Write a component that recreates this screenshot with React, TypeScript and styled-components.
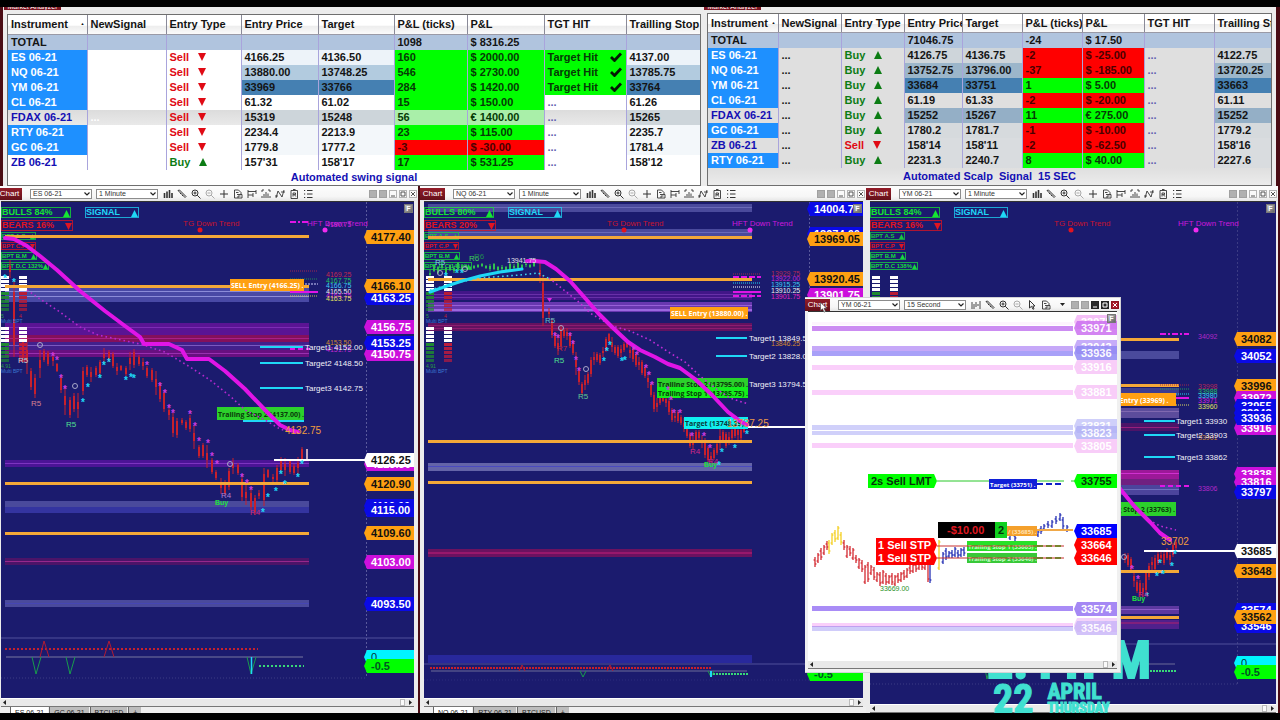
import React from "react";
import styled, { createGlobalStyle } from "styled-components";

/* ---------- theme ---------- */

const SANS = '"Liberation Sans", Arial, sans-serif';
const HUMANIST = '"Open Sans", "Noto Sans", sans-serif';
const NAVY = "#1b1b6e";
const MAROON = "#7c1420";
const FRAME = "#ececec";
const ORANGE = "#ffa012";
const MAGENTA = "#e015e6";
const VIOLET = "#cc10dc";
const BLUE = "#0a0ae6";
const LIME = "#00ff00";
const CYAN = "#1fd8f6";
const RED = "#c8202c";

const GlobalStyle = createGlobalStyle`
  * { box-sizing: border-box; }
  html, body { margin: 0; background: #000; }
  body { font-family: ${SANS}; }
  button, select { font-family: inherit; border-radius: 0; margin: 0; padding: 0; }
`;

const Desktop = styled.main`
  position: relative;
  display: flex;
  flex-direction: column;
  height: 100vh;
  min-height: 480px;
  border: solid #000;
  border-width: 7px 0;
  overflow: hidden;
  background: #000;
`;

/* ---------- analyzer tables ---------- */

const AnalyzerRow = styled.div`
  display: grid;
  grid-template-columns: 704fr 576fr;
  height: 179px;
  flex: none;
`;

const AnalyzerPanel = styled.section<{ $side: "left" | "right" }>`
  display: flex;
  flex-direction: column;
  min-width: 0;
  background: ${FRAME};
  border: solid #4a0c14;
  border-width: ${(p) => (p.$side === "left" ? "0 0 0 3px" : "0 4px 0 0")};
  padding: ${(p) => (p.$side === "left" ? "0 3px 0 4px" : "0 4px 0 3px")};
`;

const TitleStrip = styled.header<{ $height: number }>`
  height: ${(p) => p.$height}px;
  flex: none;
  margin: 0 -3px;
`;

const TitleTab = styled.h2`
  width: 57px;
  height: 3px;
  margin: 0;
  overflow: hidden;
  display: flex;
  align-items: flex-end;
  justify-content: center;
  background: ${MAROON};
  color: #fff;
  font-size: 7px;
  font-weight: 400;
  line-height: 6px;
  white-space: nowrap;
`;

const Sheet = styled.div<{ $bg: string }>`
  flex: 1;
  display: flex;
  flex-direction: column;
  border: 1px solid #6f6f6f;
  background: ${(p) => p.$bg};
  overflow: hidden;
`;

const Grid = styled.table`
  width: 100%;
  table-layout: fixed;
  border-collapse: collapse;
  font-size: 11px;
  font-weight: 700;
  color: #141414;
`;

const HeadCell = styled.th<{ $height: number }>`
  height: ${(p) => p.$height}px;
  padding: 0 0 0 3px;
  text-align: left;
  line-height: 16px;
  white-space: nowrap;
  overflow: hidden;
  background: linear-gradient(#fff 55%, #ececec 56%, #fafafa);
  border-left: 1px solid #8a8a98;
  border-bottom: 1px solid #9a9aa6;
  &:first-child { border-left: 0; }
`;

const SortMark = styled.span`
  float: right;
  margin-right: 2px;
  font-size: 4px;
`;

const Cell = styled.td<{ $bg?: string; $fg?: string }>`
  height: 15px;
  padding: 0 0 0 3px;
  line-height: 15px;
  white-space: nowrap;
  overflow: hidden;
  background: ${(p) => p.$bg ?? "transparent"};
  color: ${(p) => p.$fg ?? "inherit"};
  border-left: 1px solid #a9a4dc;
  &:first-child { border-left: 0; }
`;

const Direction = styled.span`
  display: flex;
  align-items: center;
  gap: 9px;
`;

const HitMark = styled.span`
  display: flex;
  align-items: center;
  justify-content: space-between;
  padding-right: 4px;
`;

const Footnote = styled.p`
  flex: 1;
  margin: 0;
  display: flex;
  align-items: center;
  justify-content: center;
  color: #1410b4;
  font-size: 11px;
  font-weight: 700;
  line-height: 14px;
  white-space: pre;
`;

type Trade = {
  name: string;
  plain?: boolean;
  buy?: boolean;
  entry: string;
  target: string;
  ticks: string;
  pl: string;
  hit?: boolean;
  stop: string;
  shade?: string;
  row?: string;
  win?: string;
};

const HEADINGS = ["Instrument", "NewSignal", "Entry Type", "Entry Price", "Target", "P&L (ticks)", "P&L", "TGT HIT", "Trailling Stop"];

const swingTrades: Trade[] = [
  { name: "ES 06-21", entry: "4166.25", target: "4136.50", ticks: "160", pl: "$ 2000.00", hit: true, stop: "4137.00", shade: "#edf3f9" },
  { name: "NQ 06-21", entry: "13880.00", target: "13748.25", ticks: "546", pl: "$ 2730.00", hit: true, stop: "13785.75", shade: "#b2cbdf" },
  { name: "YM 06-21", entry: "33969", target: "33766", ticks: "284", pl: "$ 1420.00", hit: true, stop: "33764", shade: "#4580b2" },
  { name: "CL 06-21", entry: "61.32", target: "61.02", ticks: "15", pl: "$ 150.00", stop: "61.26" },
  { name: "FDAX 06-21", plain: true, entry: "15319", target: "15248", ticks: "56", pl: "€ 1400.00", stop: "15265", shade: "#cdd5da", row: "linear-gradient(#dcdcdc, #e9e9e9)", win: "#a9efa9" },
  { name: "RTY 06-21", entry: "2234.4", target: "2213.9", ticks: "23", pl: "$ 115.00", stop: "2235.7", shade: "#f3f7fa" },
  { name: "GC 06-21", entry: "1779.8", target: "1777.2", ticks: "-3", pl: "$ -30.00", stop: "1781.4", shade: "#f3f7fa" },
  { name: "ZB 06-21", plain: true, buy: true, entry: "157'31", target: "158'17", ticks: "17", pl: "$ 531.25", stop: "158'12" },
];

const scalpTrades: Trade[] = [
  { name: "ES 06-21", buy: true, entry: "4126.75", target: "4136.75", ticks: "-2", pl: "$ -25.00", stop: "4122.75", shade: "#ced5da" },
  { name: "NQ 06-21", buy: true, entry: "13752.75", target: "13796.00", ticks: "-37", pl: "$ -185.00", stop: "13720.25", shade: "#9cb6ca" },
  { name: "YM 06-21", buy: true, entry: "33684", target: "33751", ticks: "1", pl: "$ 5.00", stop: "33663", shade: "#4580b2" },
  { name: "CL 06-21", buy: true, entry: "61.19", target: "61.33", ticks: "-2", pl: "$ -20.00", stop: "61.11" },
  { name: "FDAX 06-21", plain: true, buy: true, entry: "15252", target: "15267", ticks: "11", pl: "€ 275.00", stop: "15252", shade: "#94afc6" },
  { name: "GC 06-21", buy: true, entry: "1780.2", target: "1781.7", ticks: "-1", pl: "$ -10.00", stop: "1779.2", shade: "#d6dadd" },
  { name: "ZB 06-21", plain: true, entry: "158'14", target: "158'11", ticks: "-2", pl: "$ -62.50", stop: "158'16", shade: "#d9dcdf" },
  { name: "RTY 06-21", buy: true, entry: "2231.3", target: "2240.7", ticks: "8", pl: "$ 40.00", stop: "2227.6", shade: "#d9dcdf" },
];

function Analyzer(props: {
  widths: number[];
  headHeight: number;
  totals: string[];
  trades: Trade[];
  dots: boolean;
}) {
  const { widths, headHeight, totals, trades, dots } = props;
  return (
    <Grid>
      <colgroup>
        {widths.map((w, i) => (
          <col key={i} width={w} />
        ))}
      </colgroup>
      <thead>
        <tr>
          {HEADINGS.map((h, i) => (
            <HeadCell key={h} $height={headHeight} scope="col">
              {h}
              {i === 0 && <SortMark>▲</SortMark>}
            </HeadCell>
          ))}
        </tr>
      </thead>
      <tbody>
        <tr>
          {totals.map((t, i) => (
            <Cell key={i} $bg="#b0c4de">{t}</Cell>
          ))}
        </tr>
        {trades.map((t) => {
          const loss = t.ticks.startsWith("-");
          const score = loss ? "#ff0000" : t.win ?? LIME;
          const ink = loss ? "#4a0000" : "#063a06";
          return (
            <tr key={t.name} style={{ background: t.row }}>
              <Cell $bg={t.plain ? undefined : "#1e90ff"} $fg={t.plain ? "#1410b4" : "#fff"}>{t.name}</Cell>
              <Cell $fg={dots ? undefined : "#fff"}>{dots || t.row ? "..." : ""}</Cell>
              <Cell $fg={t.buy ? "#0c7c14" : "#e00a14"}>
                <Direction>
                  {t.buy ? "Buy" : "Sell"}
                  <svg width="8" height="8" viewBox="0 0 8 8">
                    <path d={t.buy ? "M0 8L4 0L8 8Z" : "M0 0H8L4 8Z"} fill="currentColor" />
                  </svg>
                </Direction>
              </Cell>
              <Cell $bg={t.shade}>{t.entry}</Cell>
              <Cell $bg={t.shade}>{t.target}</Cell>
              <Cell $bg={score} $fg={ink}>{t.ticks}</Cell>
              <Cell $bg={score} $fg={ink}>{t.pl}</Cell>
              <Cell $bg={t.hit ? LIME : undefined} $fg={t.hit ? "#063a06" : "#6060b0"}>
                {t.hit ? (
                  <HitMark>
                    Target Hit
                    <svg width="12" height="10" viewBox="0 0 12 10">
                      <path d="M1 5L4.5 8.5L11 1.5" fill="none" stroke="#041804" strokeWidth="2.8" />
                    </svg>
                  </HitMark>
                ) : (
                  "..."
                )}
              </Cell>
              <Cell $bg={t.shade}>{t.stop}</Cell>
            </tr>
          );
        })}
      </tbody>
    </Grid>
  );
}

/* ---------- chart window chrome ---------- */

const ChartRow = styled.div`
  display: grid;
  grid-template-columns: 420fr 446fr 414fr;
  flex: 1;
  min-height: 0;
`;

const ChartWindow = styled.section<{ $edge?: boolean }>`
  display: flex;
  flex-direction: column;
  min-width: 0;
  min-height: 0;
  background: ${FRAME};
  border-right: ${(p) => (p.$edge ? "2px solid #4a0c14" : "0")};
`;

const Toolbar = styled.div<{ $height: number; $shift?: number }>`
  display: flex;
  align-items: center;
  height: ${(p) => p.$height}px;
  flex: none;
  padding: 0 1px 0 0;
  background: linear-gradient(#fdfdfd, #f6f6f6 70%, #e6e6e6);
  overflow: hidden;
  & > :first-child { margin-left: ${(p) => -(p.$shift ?? 0)}px; }
`;

const ChartTab = styled.button`
  flex: none;
  width: 25px;
  height: 12px;
  margin-right: 8px;
  border: 0;
  background: linear-gradient(#941c28, #64101a);
  color: #fff;
  font-size: 8px;
  line-height: 12px;
`;

const Picker = styled.label`
  position: relative;
  flex: none;
  width: 62px;
  height: 10px;
  margin-right: 4px;
  display: block;
  color: #222;
  & select {
    display: block;
    appearance: none;
    width: 100%;
    height: 10px;
    border: 1px solid #8c8c8c;
    background: #fff;
    color: #333;
    font-size: 7px;
    line-height: 8px;
    padding-left: 2px;
  }
  & svg { position: absolute; right: 2px; top: 3px; pointer-events: none; }
`;

const IconRow = styled.div`
  display: flex;
  flex: none;
  margin-left: -1px;
`;

const IconButton = styled.button`
  width: 14px;
  height: 12px;
  display: grid;
  place-items: center;
  border: 0;
  background: none;
  color: #333;
`;

const WindowButtons = styled.div`
  display: flex;
  flex: none;
  gap: 2px;
  margin-left: auto;
`;

const WindowButton = styled.button<{ $tone: "grey" | "light" | "dark" | "red" }>`
  width: 8px;
  height: 8px;
  display: grid;
  place-items: center;
  border: 1px solid ${(p) => ({ grey: "#a0a0a0", light: "#b4b4b4", dark: "#222", red: "#8c1420" })[p.$tone]};
  background: ${(p) => ({ grey: "#b0b0b0", light: "#fafafa", dark: "#2a2a2a", red: "#a81c2a" })[p.$tone]};
  color: ${(p) => (p.$tone === "light" ? "#555" : "#fff")};
`;

const PlotFrame = styled.div<{ $sides: string; $bg: string }>`
  position: relative;
  flex: 1;
  min-height: 0;
  margin: ${(p) => `0 ${p.$sides}`};
  border-top: 1px solid #333;
  background: ${(p) => p.$bg};
  & > svg { display: block; width: 100%; height: 100%; }
`;

const FixedButton = styled.button`
  position: absolute;
  top: 2px;
  right: 1px;
  width: 9px;
  height: 9px;
  border: 1px solid #777;
  background: linear-gradient(135deg, #bbb, #666);
  color: #fff;
  font-size: 7px;
  font-weight: 700;
  line-height: 7px;
`;

const ScrollTrack = styled.div<{ $sides: string }>`
  flex: none;
  display: flex;
  justify-content: space-between;
  align-items: center;
  height: 9px;
  margin: ${(p) => `0 ${p.$sides}`};
  padding: 0 2px;
  background: #e9e9e9;
  border-top: 1px solid #fff;
  border-bottom: 1px solid #777;
`;

const ScrollEnd = styled.span`
  display: flex;
  gap: 4px;
  align-items: center;
`;

const ScrollThumb = styled.span`
  width: 5px;
  height: 7px;
  background: #fafafa;
  border: 1px solid #bbb;
`;

const TabStrip = styled.div<{ $indent: number }>`
  flex: none;
  display: flex;
  gap: 1px;
  align-items: flex-start;
  height: 6px;
  padding-left: ${(p) => p.$indent}px;
  background: #efefef;
  overflow: hidden;
`;

const SheetTab = styled.button<{ $active?: boolean }>`
  flex: none;
  height: 12px;
  padding: 0 4px;
  border: 0;
  border-left: 1px solid #666;
  background: ${(p) => (p.$active ? "#fff" : "#bdbdbd")};
  color: #222;
  font-size: 7px;
  line-height: 12px;
`;

const icons: Record<string, React.ReactNode> = {
  bars: <path d="M1.5 4V9M4 2.5V9M6.5 1V9M9 4V9" strokeWidth="1.6" />,
  thinBars: <path d="M1 2V9M3 4V9M5 2V7M7 4V6M9 1V9" strokeWidth="0.9" />,
  pencil: <path d="M1 1.5L8 8.5M2.5 1L9 7.5M8 8.5L9 7.5M1 1.5L2.5 1M3 5L4 4M5 7L6 6" />,
  zoomIn: <path d="M6.2 6.2L9.5 9.5M1 4a3 3 0 1 0 6 0a3 3 0 1 0-6 0M4 2.5V5.5M2.5 4H5.5" />,
  zoomOut: <path d="M6.2 6.2L9.5 9.5M1 4a3 3 0 1 0 6 0a3 3 0 1 0-6 0M2.5 4H5.5" stroke="#aaa" />,
  cross: <path d="M5 1V9M1 5H9" />,
  pointer: <path d="M2.5 .5V8L4.5 6.3L6 9.3L7 8.7L5.8 6H8Z" />,
  page: <path d="M1.5 9V1H5.5L8 3.5V5M1.5 9H5M4 5.5H9V9H5V7H7.5M3 3.5H5.5" strokeWidth="0.9" />,
  range: <path d="M1 1V9M9 1V5M1 2.5H9M1 6H6M6 4V8" strokeWidth="0.9" />,
  study: <path d="M1 3V1H3M7 1H9V3M1 7V9M9 7V9M3 9V5M5 9V3M7 9V4.5" strokeWidth="0.9" />,
  zig: <path d="M1 9L3 2L7 8L9 1M0 7H3M6 3H10" strokeWidth="0.9" />,
  script: <path d="M2 1.5H8.5V9.5H2ZM4 0.5H6.5M4 7.5V4H6.5V5.7H4M5.5 5.7L6.8 7.5" strokeWidth="0.9" />,
  list: <path d="M1 1.5H2.2M1 5H2.2M1 8.5H2.2M4 1.5H9.5M4 5H9.5M4 8.5H9.5" />,
};

const FULL_TOOLS = ["bars", "pencil", "zoomIn", "zoomOut", "cross", "page", "range", "study", "zig", "script", "list"];
const SHORT_TOOLS = ["thinBars", "pencil", "zoomIn", "zoomOut", "pointer", "page"];

function Chevron() {
  return (
    <svg width="6" height="4" viewBox="0 0 6 4">
      <path d="M.5 .5L3 3L5.5 .5" fill="none" stroke="#222" strokeWidth="1.2" />
    </svg>
  );
}

function ChartToolbar(props: { symbol: string; period: string; height: number; shift?: number; focused?: boolean }) {
  const { symbol, period, height, shift, focused } = props;
  const tones = focused ? (["grey", "grey", "dark", "dark", "red"] as const) : (["grey", "grey", "light", "light", "light"] as const);
  const marks = ["", "", "M1 5H5", "M1 1H5V5H1Z", "M1 1L5 5M5 1L1 5"];
  const names = ["Link instrument", "Link interval", "Minimize", "Maximize", "Close"];
  return (
    <Toolbar $height={height} $shift={shift}>
      <ChartTab>Chart</ChartTab>
      <Picker>
        <select aria-label="Instrument" defaultValue={symbol}>
          <option>{symbol}</option>
        </select>
        <Chevron />
      </Picker>
      <Picker>
        <select aria-label="Interval" defaultValue={period}>
          <option>{period}</option>
        </select>
        <Chevron />
      </Picker>
      <IconRow>
        {(focused ? SHORT_TOOLS : FULL_TOOLS).map((t) => (
          <IconButton key={t} aria-label={t}>
            <svg width="10" height="10" viewBox="0 0 10 10" fill="none" stroke="currentColor" strokeWidth="1">
              {icons[t]}
            </svg>
          </IconButton>
        ))}
      </IconRow>
      <WindowButtons>
        {focused && (
          <IconButton aria-label="More tools">
            <svg width="5" height="3" viewBox="0 0 5 3">
              <path d="M0 0H5L2.5 3Z" fill="#222" />
            </svg>
          </IconButton>
        )}
        {tones.map((tone, i) => (
          <WindowButton key={names[i]} $tone={tone} aria-label={names[i]} style={{ alignSelf: "center" }}>
            <svg width="6" height="6" viewBox="0 0 6 6" fill="none" stroke="currentColor">
              <path d={marks[i]} />
            </svg>
          </WindowButton>
        ))}
      </WindowButtons>
    </Toolbar>
  );
}

function Scrollbar({ sides }: { sides: string }) {
  return (
    <ScrollTrack $sides={sides}>
      <svg width="3" height="5" viewBox="0 0 3 5"><path d="M3 0V5L0 2.5Z" fill="#222" /></svg>
      <ScrollEnd>
        <ScrollThumb />
        <svg width="3" height="5" viewBox="0 0 3 5"><path d="M0 0V5L3 2.5Z" fill="#222" /></svg>
      </ScrollEnd>
    </ScrollTrack>
  );
}

function Sheets({ indent, names }: { indent: number; names: string[] }) {
  return (
    <TabStrip $indent={indent}>
      {names.map((n, i) => (
        <SheetTab key={n} $active={i === 0}>{n}</SheetTab>
      ))}
    </TabStrip>
  );
}

/* ---------- drawing primitives ---------- */

const Txt = styled.text<{ $size: number; $bold?: boolean; $face?: string }>`
  font-family: ${(p) => p.$face ?? SANS};
  font-size: ${(p) => p.$size}px;
  font-weight: ${(p) => (p.$bold ? 700 : 400)};
  white-space: pre;
`;

type Band = [y: number, h: number, color: string, opacity?: number];

function Bands({ x1, x2, items }: { x1: number; x2: number; items: Band[] }) {
  return (
    <g>
      {items.map(([y, h, c, o], i) => (
        <rect key={i} x={x1} y={y} width={x2 - x1} height={h} fill={c} opacity={o ?? 1} />
      ))}
    </g>
  );
}

type Tag = [label: string, y: number, fill: string, ink?: string, opacity?: number];

function PriceTags({ x, right, items }: { x: number; right: number; items: Tag[] }) {
  return (
    <g>
      {items.map(([label, y, fill, ink, op], i) => (
        <g key={i} opacity={op ?? 1}>
          <path d={`M${x} ${y}L${x + 3} ${y - 7}H${right}V${y + 7}H${x + 3}Z`} fill={fill} />
          <Txt $size={11} $bold={label !== "0"} x={x + 7} y={y + 4} fill={ink ?? "#fff"}>{label}</Txt>
        </g>
      ))}
    </g>
  );
}

function Candles({ bars, color }: { bars: number[][]; color: string }) {
  return (
    <g stroke={color}>
      {bars.map(([x, top, bottom], i) => {
        const pad = Math.round((bottom - top) * (i % 3 === 0 ? 0.35 : 0.15));
        return (
          <g key={i}>
            <path d={`M${x} ${top}V${bottom}`} strokeWidth="1" />
            <path d={`M${x} ${top + pad}V${bottom - pad}`} strokeWidth="2" />
          </g>
        );
      })}
    </g>
  );
}

function Ohlc({ bars, color }: { bars: number[][]; color: string }) {
  const d = bars.map(([x, t, b], i) => `M${x} ${t}V${b}M${x - 1.5} ${i % 2 ? b - 2 : t + 3}H${x}M${x} ${i % 2 ? t + 2 : b - 3}H${x + 1.5}`).join("");
  return <path d={d} stroke={color} strokeWidth="1.2" fill="none" />;
}

const spread = (x0: number, step: number, ranges: number[][]) => ranges.map(([t, b], i) => [x0 + i * step, t, b]);

function Line({ points, color, width = 4, dotted }: { points: string; color: string; width?: number; dotted?: boolean }) {
  return (
    <polyline
      points={points}
      fill="none"
      stroke={color}
      strokeWidth={dotted ? 1.6 : width}
      strokeDasharray={dotted ? "1.6 3" : undefined}
      strokeLinejoin="round"
      strokeLinecap={dotted ? "butt" : "round"}
    />
  );
}

function Stars({ at, color }: { at: number[][]; color: string }) {
  return (
    <g fill={color}>
      {at.map(([x, y], i) => (
        <Txt key={i} $size={10} $bold x={x} y={y + 6} textAnchor="middle">*</Txt>
      ))}
    </g>
  );
}

function Box(props: { x: number; y: number; w: number; h: number; fill: string; ink: string; label: string; opacity?: number; size?: number }) {
  const { x, y, w, h, fill, ink, label, opacity, size } = props;
  return (
    <g>
      <rect x={x} y={y} width={w} height={h} fill={fill} opacity={opacity ?? 1} />
      <Txt $size={size ?? 7} $bold $face={HUMANIST} x={x + 1} y={y + h / 2 + 3} fill={ink}>{label}</Txt>
    </g>
  );
}

function Meter({ x, y, color }: { x: number; y: number; color: string }) {
  const cells = Array.from({ length: 9 }, (_, i) => i);
  return (
    <g>
      {cells.map((i) => (
        <rect key={i} x={x} y={y + i * 4} width="8" height="3" fill={i < 4 ? "#fff" : color} opacity={i < 4 ? 1 : 1 - (i - 4) * 0.08} />
      ))}
    </g>
  );
}

function Badge(props: { x: number; y: number; w: number; label: string; color: string; down?: boolean; small?: boolean }) {
  const { x, y, w, label, color, down, small } = props;
  const h = small ? 8 : 11;
  const t = small ? 5 : 7;
  const r = x + w - 1;
  const b = y + h - 1;
  return (
    <g>
      <rect x={x + 0.5} y={y + 0.5} width={w - 1} height={h - 1} fill="none" stroke={color} opacity="0.75" />
      <Txt $size={small ? 6 : 9} $bold x={x + 1} y={b - (small ? 1 : 2)} fill={color}>{label}</Txt>
      <path d={down ? `M${r - t} ${b - t}H${r}L${r - t / 2} ${b}Z` : `M${r - t} ${b}L${r - t / 2} ${b - t}L${r} ${b}Z`} fill={color} />
    </g>
  );
}

function Header(props: { x: number; bulls: string; bears: string; dc: string; tg: number; hft: number }) {
  const { x, bulls, bears, dc, tg, hft } = props;
  return (
    <g>
      <Badge x={x} y={207} w={70} label={`BULLS ${bulls}%`} color="#14e632" />
      <Badge x={x} y={220} w={72} label={`BEARS ${bears}%`} color="#e01420" down />
      <Badge x={x + 84} y={207} w={54} label="SIGNAL" color={CYAN} />
      <Badge x={x} y={232} w={35} label="BPT A.S" color="#18c840" small />
      <Badge x={x} y={242} w={35} label="BPT C.P" color="#dc1424" down small />
      <Badge x={x} y={252} w={36} label="BPT B.M" color="#18d840" small />
      <Badge x={x} y={262} w={48} label={`BPT D.C ${dc}%`} color="#18d840" small />
      <Txt $size={8} x={tg - 17} y={226} fill="#c8142c">TG Down Trend</Txt>
      <circle cx={tg} cy={230} r="2.5" fill="#e01420" />
      <Txt $size={8} x={hft - 18} y={226} fill="#cc18dc">HFT Down Trend</Txt>
      <circle cx={hft} cy={230} r="2.5" fill="#f02cf0" />
    </g>
  );
}

function Meters({ x }: { x: number }) {
  return (
    <g>
      <Meter x={x} y={276} color="#1f8a30" />
      <Meter x={x + 18} y={276} color="#b81c34" />
      <Meter x={x} y={327} color="#1f8a30" />
      <Meter x={x + 18} y={327} color="#c01c3c" />
      <Txt $size={5} x={x} y={318} fill="#28a040">5</Txt>
      <Txt $size={5} x={x + 18} y={318} fill="#c02030">4</Txt>
      <Txt $size={5} x={x} y={323} fill="#3c78d0">Multi BPT</Txt>
      <Txt $size={5} x={x} y={368} fill="#28a040">4.91</Txt>
      <Txt $size={5} x={x} y={373} fill="#3c78d0">Multi BPT</Txt>
    </g>
  );
}

function Labels({ x, size, items }: { x: number; size: number; items: [string, number, string][] }) {
  return (
    <g>
      {items.map(([t, y, c]) => (
        <Txt key={t + y} $size={size} x={x} y={y} fill={c}>{t}</Txt>
      ))}
    </g>
  );
}

function Rules({ items }: { items: [x1: number, x2: number, y: number, color: string, width: number, dash?: string][] }) {
  return (
    <g>
      {items.map(([x1, x2, y, c, w, dash], i) => (
        <path key={i} d={`M${x1} ${y}H${x2}`} stroke={c} strokeWidth={w} strokeDasharray={dash} />
      ))}
    </g>
  );
}

/* ---------- ES one-minute ---------- */

const esBars = [
  [10, 260, 278], [14, 280, 357], [23, 338, 362], [27, 337, 374], [31, 368, 390], [35, 374, 398], [40, 350, 378], [44, 349, 362],
  [48, 351, 366], [53, 352, 366], [57, 363, 372], [61, 375, 393], [65, 386, 415], [70, 397, 418], [74, 393, 412], [78, 393, 418],
  [83, 367, 395], [87, 365, 377], [91, 367, 382], [96, 366, 377], [100, 360, 375], [104, 348, 364], [109, 350, 362], [113, 352, 368],
  [117, 363, 375], [121, 365, 371], [126, 366, 376], [130, 352, 370], [134, 349, 368], [139, 355, 366], [143, 358, 370],
  [147, 366, 378], [152, 368, 382], [156, 371, 395], [160, 382, 402], [164, 390, 412], [169, 405, 420], [173, 413, 437],
  [177, 418, 438], [182, 418, 425], [186, 420, 430], [190, 415, 432], [194, 425, 449], [199, 445, 458], [203, 443, 458],
  [207, 445, 468], [212, 458, 474], [216, 470, 480], [221, 478, 494], [225, 480, 495], [229, 468, 490], [233, 458, 474],
  [238, 463, 475], [242, 475, 501], [246, 485, 505], [251, 490, 510], [255, 495, 515], [259, 490, 499], [264, 468, 506],
  [268, 469, 478], [273, 474, 482], [277, 465, 483], [281, 457, 472], [285, 458, 476], [290, 459, 474], [294, 464, 475],
  [298, 457, 474], [302, 447, 462],
];

function EsPlot() {
  return (
    <svg viewBox="1 202 413 496" preserveAspectRatio="xMaxYMin meet" role="img" aria-label="ES 06-21 one minute chart">
      <path d="M366.5 202V678" stroke="#5a5a9c" strokeDasharray="2 2" />
      <Header x={1} bulls="84" bears="16" dc="132" tg={200} hft={325} />
      <Bands
        x1={5}
        x2={309}
        items={[
          [288, 14, "#5a5ab8", 0.75], [291, 1, "#8c8cd8"], [296, 1, "#8c8cd8"],
          [323, 12, "#5a1494"], [327, 1, "#7c2cb4"], [335, 7, "#84105c"], [338, 1, "#a82088"], [342, 8, "#42208c"],
          [345, 1, "#7a58c0"], [350, 7, "#681080"], [353, 1, "#9830b0"],
          [460, 7, "#4c1496"], [463, 1, "#7c34c0"],
          [501, 6, "#4a4a9c"], [507, 6, "#3434a0"],
          [558, 7, "#4c1468"], [561, 1, "#96288c"],
          [600, 7, "#4a4a9c"], [603, 1, "#4646b4"],
        ]}
      />
      <Candles bars={esBars} color={RED} />
      <path d="M307 449V460" stroke="#ffd8d8" strokeWidth="1.5" />
      <Meters x={1} />
      <Bands x1={5} x2={309} items={[[235, 3, "#f4a838"], [285, 3, "#f4a838"], [482, 3, "#f4a838"], [532, 3, "#f4a838"]]} />
      <Rules
        items={[
          [290, 310, 222, MAGENTA, 2, "6 2 2 2"],
          [290, 318, 271, "#a02850", 1, "1 1"], [290, 318, 279, "#209050", 1, "1 1"], [290, 318, 284, "#d0d0ff", 1, "2 1"],
          [290, 318, 292, MAGENTA, 2], [290, 318, 296, "#c8c850", 1, "1 1"],
          [260, 303, 347, CYAN, 2], [260, 303, 363, CYAN, 2], [260, 303, 388, CYAN, 2], [290, 310, 349, MAGENTA, 2, "5 3"],
          [243, 304, 421, CYAN, 2],
          [274, 366, 460, "#fff", 2],
        ]}
      />
      <Box x={230} y={279} w={74} h={12} fill={ORANGE} ink="#fff" label="SELL Entry (4166.25) ." />
      <Box x={217} y={407} w={87} h={13} fill="#2cd02c" ink="#0a3a0a" label="Trailing Stop 2 (4137.00) ." />
      <Line points="27,290 40,299 60,312 80,327 98,335 140,344 165,352 190,367 210,380 230,396 245,410 265,420 280,429 290,432" color="#b428d0" dotted />
      <Line points="5,238 14,239 27,246 40,256 57,270 80,291 105,311 125,326 140,337 144,344 169,344 182,350 187,359 209,359 225,371 245,389 265,410 280,425 290,430 298,432" color={MAGENTA} />
      <Stars at={[[53, 354], [57, 358], [61, 376], [65, 387], [147, 363], [160, 384], [165, 391], [169, 406], [173, 411], [190, 412], [195, 424], [199, 439], [208, 441], [212, 454], [217, 462], [242, 475], [247, 481], [251, 488]]} color="#c83ce0" />
      <Stars at={[[83, 400], [88, 385], [100, 376], [104, 363], [109, 360], [126, 378], [131, 375], [134, 376], [263, 510], [268, 495], [276, 489], [281, 472], [285, 482], [298, 475], [302, 462], [5, 276], [14, 280]]} color={CYAN} />
      <g fill="none" stroke="#a8a8c8">
        <circle cx="40" cy="345" r="2.5" />
        <circle cx="75" cy="386" r="2.5" />
        <circle cx="230" cy="464" r="2.5" />
      </g>
      <Labels x={18} size={8} items={[["R5", 363, "#d0d0d8"]]} />
      <Labels x={31} size={8} items={[["R5", 406, "#d88090"]]} />
      <Labels x={66} size={8} items={[["R5", 427, "#50e090"]]} />
      <Labels x={221} size={8} items={[["R4", 498, "#b080d0"]]} />
      <Labels x={250} size={8} items={[["R4", 515, "#c82878"]]} />
      <Txt $size={7} $bold x={215} y={505} fill="#20e040">Buy</Txt>
      <Labels
        x={326}
        size={7}
        items={[
          ["4180.75", 227, "#d028dc"], ["4169.25", 277, "#c02850"], ["4167.75", 283, "#20c060"], ["4166.75", 288, "#40c8f0"],
          ["4165.50", 294, "#f0f0f0"], ["4164.75", 298, "#d028dc"], ["4163.75", 301, "#e0e060"], ["4153.50", 345, "#d08830"], ["4151.75", 352, "#c028d0"],
        ]}
      />
      <Labels x={305} size={8} items={[["Target1 4152.00", 350, "#f0f0f8"], ["Target2 4148.50", 366, "#f0f0f8"], ["Target3 4142.75", 391, "#f0f0f8"]]} />
      <Labels x={285} size={10} items={[["4132.75", 434, "#f09c40"]]} />
      <PriceTags
        x={364}
        right={414}
        items={[
          ["4177.40", 237, ORANGE, "#111"], ["4163.25", 298, BLUE], ["4166.10", 286, ORANGE, "#111"], ["4156.75", 327, VIOLET],
          ["4150.75", 354, VIOLET], ["4153.25", 343, BLUE], ["4125.50", 464, VIOLET], ["4126.25", 460, "#fff", "#111"],
          ["4120.90", 484, ORANGE, "#111"], ["4116.00", 506, BLUE], ["4115.00", 510, BLUE], ["4109.60", 533, ORANGE, "#111"],
          ["4103.00", 562, VIOLET], ["4093.50", 604, BLUE], ["0", 657, "#00f4ff", "#033"], ["-0.5", 666, LIME, "#052"],
        ]}
      />
      <Rules items={[[1, 414, 638, "#50509a", 1], [6, 303, 657, "#7878a0", 1], [5, 258, 649, RED, 2, "2 2"], [259, 304, 666, "#38d878", 2, "2 2"], [1, 366, 678, "#3c3c84", 1, "1 2"]]} />
      <path d="M40 657L44 641L49 657M104 657L109 641L114 657" fill="none" stroke="#b01c34" />
      <path d="M32 657L36 674L41 657M66 657L70 674L75 657M247 657L251 674L256 657" fill="none" stroke="#189c4c" />
      <path d="M251.500 657V674" stroke={CYAN} strokeWidth="1.5" />
    </svg>
  );
}

/* ---------- NQ one-minute ---------- */

const nqBars = spread(549, 3, [
  [308, 318], [318, 338], [332, 348], [337, 355], [325, 350], [328, 338], [328, 340], [333, 348], [340, 355], [352, 375], [368, 385],
  [382, 395], [375, 390], [372, 385], [357, 377], [352, 365], [352, 362], [353, 365], [347, 357], [337, 352], [333, 342], [337, 352],
  [345, 355], [345, 358], [345, 357], [342, 352], [342, 348], [345, 358], [345, 362], [352, 367], [357, 370], [360, 375], [365, 378],
  [372, 388], [382, 397], [392, 412], [398, 412], [395, 405], [395, 402], [395, 407], [398, 415], [408, 422], [412, 422], [410, 423],
  [415, 425], [418, 432], [423, 438], [432, 448], [435, 450], [430, 442], [430, 440], [435, 448], [438, 458], [446, 462], [452, 463],
  [448, 460], [442, 455], [428, 450], [430, 442], [432, 448], [432, 445], [428, 440], [427, 438], [425, 440], [428, 440], [425, 433],
]);

const nqOpening = spread(430, 4, [
  [270, 278], [264, 272], [266, 274], [263, 270], [267, 274], [264, 271], [266, 273], [262, 270], [265, 271], [264, 268], [266, 270],
  [265, 269], [264, 268], [263, 267], [265, 269], [264, 271], [263, 270], [266, 271], [265, 271], [266, 272], [263, 272], [264, 270],
  [262, 269], [264, 270], [262, 267], [264, 268], [261, 267],
]);

function NqPlot() {
  return (
    <svg viewBox="424 202 439 496" preserveAspectRatio="xMaxYMin meet" role="img" aria-label="NQ 06-21 one minute chart">
      <path d="M809.500 202V678" stroke="#5a5a9c" strokeDasharray="2 2" />
      <Bands
        x1={428}
        x2={752}
        items={[
          [204, 8, "#4a4a9c"], [207, 1, "#6a6ab8"], [229, 7, "#4a4a9c"], [232, 1, "#6a6ab8"],
          [291, 9, "#421688"], [294, 1, "#6830a8"], [297, 1, "#6830a8"], [302, 10, "#6838b0"], [305, 1, "#9860d8"], [309, 2, "#9c68e0"],
          [323, 8, "#641260"], [325, 1, "#8c1c70"], [328, 1, "#8c1c70"],
          [463, 8, "#6464a8"], [466, 1, "#4a4ac0"], [549, 8, "#6c1260"], [552, 2, "#98186c"], [655, 8, "#28289c"],
        ]}
      />
      <Header x={424} bulls="80" bears="20" dc="141" tg={624} hft={750} />
      <Candles bars={nqOpening} color="#30c050" />
      <Candles bars={[[540, 263, 283], [543, 275, 326]]} color={RED} />
      <Candles bars={nqBars} color={RED} />
      <Meters x={426} />
      <Bands x1={428} x2={752} items={[[236, 3, "#f4a838"], [278, 3, "#f4a838"], [440, 3, "#f4a838"], [481, 3, "#f4a838"]]} />
      <Rules
        items={[
          [733, 761, 274, "#a02850", 1, "1 1"], [733, 761, 277, MAGENTA, 2, "6 2"], [733, 761, 283, CYAN, 1, "1 1"], [733, 761, 287, "#fff", 1, "1 1"],
          [733, 761, 292, MAGENTA, 2], [733, 761, 296, MAGENTA, 2, "6 2"],
          [716, 747, 338, CYAN, 2], [716, 747, 356, CYAN, 2], [716, 747, 384, CYAN, 2],
          [737, 863, 427, "#fff", 2],
        ]}
      />
      <Box x={670} y={307} w={78} h={12} fill={ORANGE} ink="#fff" label="SELL Entry (13880.00) ." />
      <Box x={657} y={378} w={91} h={12} fill="#2cd02c" ink="#0a3a0a" label="Trailing Stop 2 (13795.00) ." />
      <Box x={657} y={387} w={91} h={11} fill="#14ee1c" ink="#0a3a0a" label="Trailing Stop 1 (13785.75) ." />
      <Box x={684} y={417} w={64} h={12} fill="#10f0f0" ink="#0a3a3a" label="Target (13748.25) ." />
      <Line points="430,290 455,283 480,278 520,275 538,273 550,279" color="#40d8f0" dotted />
      <Line points="430,292 447,286 462,281 480,276 500,272 522,269" color={CYAN} width={3} />
      <Line points="549,278 565,291 580,303 590,313 612,326 630,331 650,340 670,353 685,362 700,376 715,388 730,398 748,404" color="#c02cd8" dotted />
      <Line points="527,261 535,261 545,262 556,269 570,281 585,298 598,313 612,327 628,342 640,350 655,357 668,364 680,368 695,379 712,395 728,412 740,421 747,425" color={MAGENTA} />
      <Stars at={[[555, 334], [558, 336], [570, 334], [573, 342], [576, 358], [579, 369], [634, 348], [637, 353], [646, 366], [649, 373], [652, 383], [668, 388], [671, 398], [674, 411], [680, 411], [692, 434], [704, 434], [710, 446]]} color="#c83ce0" />
      <Stars at={[[604, 359], [607, 349], [610, 343], [622, 359], [625, 358], [446, 274], [457, 271], [462, 271], [722, 450], [735, 446], [747, 432], [719, 463]]} color={CYAN} />
      <path d="M547 298H552L549.500 302Z" fill="#e028e0" />
      <g fill="none" stroke="#a8a8c8">
        <circle cx="440" cy="273" r="2.5" />
        <circle cx="465" cy="269" r="2.5" />
        <circle cx="561" cy="328" r="2.500" />
        <circle cx="586" cy="369" r="2.500" />
      </g>
      <Labels x={469} size={8} items={[["R6", 261, "#40d060"]]} />
      <Labels x={474} size={8} items={[["R6", 259, "#208850"]]} />
      <Labels x={435} size={8} items={[["R5", 265, "#80c8e0"]]} />
      <Labels x={545} size={8} items={[["R5", 323, "#60c0c8"]]} />
      <Labels x={554} size={8} items={[["R5", 363, "#50e090"]]} />
      <Labels x={557} size={8} items={[["R7", 351, "#c02848"]]} />
      <Labels x={578} size={8} items={[["R5", 399, "#60c890"]]} />
      <Labels x={690} size={8} items={[["R4", 454, "#d02888"]]} />
      <Labels x={708} size={8} items={[["R4", 464, "#d02888"]]} />
      <Txt $size={7} $bold x={704} y={467} fill="#20e040">Buy</Txt>
      <Labels x={507} size={7} items={[["13941.75", 263, "#e0e0e8"]]} />
      <Labels
        x={771}
        size={7}
        items={[
          ["13929.75", 276, "#b02858"], ["13922.00", 281, "#c028d0"], ["13915.25", 287, "#40c8f0"], ["13910.25", 293, "#f0f0f0"],
          ["13901.75", 299, "#e028c0"], ["13846.25", 346, "#d08830"],
        ]}
      />
      <Labels x={749} size={8} items={[["Target1 13849.50", 341, "#f0f0f8"], ["Target2 13828.00", 359, "#f0f0f8"], ["Target3 13794.50", 387, "#f0f0f8"]]} />
      <Labels x={727} size={10} items={[["13737.25", 427, "#e8984a"]]} />
      <PriceTags
        x={807}
        right={863}
        items={[
          ["14004.75", 209, BLUE], ["13974.00", 234, BLUE], ["13969.05", 239, ORANGE, "#111"], ["13920.45", 279, ORANGE, "#111"],
          ["13901.75", 295, VIOLET], ["-0.5", 674, LIME, "#052"],
        ]}
      />
      <Rules items={[[424, 863, 664, "#50509a", 1], [431, 747, 671, "#6c6c98", 1], [430, 712, 668, RED, 2, "2 1"], [713, 748, 674, "#38d878", 2, "2 1"], [424, 809, 680, "#2c2c7c", 1, "1 2"]]} />
      <path d="M519 671L522 665L525 671M607 671L610 665L613 671" fill="none" stroke="#b01c34" />
      <path d="M580 671L583 677L586 671M708 671L711 677L714 671" fill="none" stroke="#189c4c" />
      <path d="M711 671V677" stroke={CYAN} strokeWidth="2" />
    </svg>
  );
}

/* ---------- YM one-minute ---------- */

const ymBars = spread(1125, 3, [
  [553, 563], [553, 567], [557, 573], [570, 587], [580, 593], [580, 597], [583, 597], [570, 593], [563, 580], [557, 570],
  [555, 572], [552, 565], [550, 563], [552, 565], [548, 560], [550, 565], [543, 557], [540, 550],
]);

function YmPlot() {
  return (
    <svg viewBox="870 202 406 502" preserveAspectRatio="xMaxYMin meet" role="img" aria-label="YM 06-21 one minute chart">
      <path d="M1237.500 202V684" stroke="#3c3c84" strokeDasharray="2 2" />
      <Header x={870} bulls="84" bears="16" dc="138" tg={1071} hft={1196} />
      <Meters x={872} />
      <Bands
        x1={874}
        x2={1179}
        items={[
          [338, 3, "#f4a838"], [351, 8, "#4a4a9c"], [384, 3, "#f4a838"], [388, 8, "#3c3c90"], [408, 10, "#5c4c9c"], [411, 1, "#8068b0"],
          [423, 8, "#4c1468"], [427, 1, "#98207c"],
          [470, 9, "#9c1898"], [473, 1, "#d030d0"], [479, 6, "#702080"], [485, 10, "#4c449c"], [489, 1, "#7070c0"],
          [606, 8, "#5c38a0"], [609, 1, "#8c5cc8"], [616, 3, "#f4a838"], [620, 9, "#50208c"], [622, 2, "#80207c"],
        ]}
      />
      <Candles bars={ymBars} color={RED} />
      <Bands x1={874} x2={1179} items={[[570, 3, "#f4a838"]]} />
      <Rules
        items={[
          [1160, 1189, 334, MAGENTA, 2, "6 2 2 2"], [1160, 1189, 385, "#a02850", 1, "1 1"], [1160, 1189, 389, "#20a050", 1, "1 1"],
          [1160, 1189, 394, CYAN, 1, "1 1"], [1160, 1189, 398, MAGENTA, 2], [1160, 1189, 405, "#e0e060", 1, "1 1"],
          [1144, 1175, 421, CYAN, 2], [1144, 1175, 435, CYAN, 2], [1144, 1175, 457, CYAN, 2], [1160, 1189, 486, MAGENTA, 2, "5 3"],
          [1144, 1235, 551, "#fff", 2],
        ]}
      />
      <Box x={1101} y={393} w={75} h={13} fill={ORANGE} ink="#fff" label="SELL Entry (33969) ." />
      <Box x={1094} y={502} w={82} h={14} fill="#2cd02c" ink="#0a3a0a" label="Trailing Stop 2 (33763) ." />
      <Line points="1145,518 1160,526 1176,530" color="#c02cd8" dotted />
      <Line points="1112,478 1121,490 1135,507 1150,522 1160,533 1170,540" color={MAGENTA} />
      <Stars at={[[1132, 567], [1138, 577]]} color="#c83ce0" />
      <Stars at={[[1147, 594], [1157, 574], [1160, 561], [1163, 572], [1172, 564], [1175, 552]]} color={CYAN} />
      <circle cx="1124" cy="557" r="2.500" fill="none" stroke="#a8a8c8" />
      <Labels x={1138} size={8} items={[["R4", 597, "#d02888"]]} />
      <Txt $size={7} $bold x={1132} y={601} fill="#20e040">Buy</Txt>
      <Labels
        x={1198}
        size={7}
        items={[
          ["34092", 339, "#b028c8"], ["33998", 389, "#b02858"], ["33988", 394, "#20c060"], ["33980", 398, "#40c8f0"],
          ["33971", 403, "#d028dc"], ["33960", 409, "#e0e060"], ["33901", 440, "#d08830"], ["33806", 491, "#b028c8"],
        ]}
      />
      <Labels x={1176} size={8} items={[["Target1 33930", 424, "#f0f0f8"], ["Target2 33903", 438, "#f0f0f8"], ["Target3 33862", 460, "#f0f0f8"]]} />
      <Labels x={1161} size={10} items={[["33702", 545, "#f09c40"]]} />
      <PriceTags
        x={1234}
        right={1276}
        items={[
          ["34082", 339, ORANGE, "#111"], ["34052", 356, BLUE], ["33996", 386, ORANGE, "#111"], ["33972", 398, VIOLET], ["33955", 406, BLUE],
          ["33916", 428, VIOLET], ["33943", 413, BLUE], ["33936", 418, BLUE], ["33838", 474, VIOLET], ["33816", 482, VIOLET], ["33797", 492, BLUE],
          ["33685", 551, "#fff", "#111"], ["33648", 571, ORANGE, "#111"], ["33574", 610, BLUE], ["33546", 626, BLUE],
          ["33562", 617, ORANGE, "#111"], ["0", 663, "#00f4ff", "#033"], ["-0.5", 672, LIME, "#052"],
        ]}
      />
      <Rules items={[[870, 1276, 644, "#50509a", 1], [876, 1175, 664, "#6c6c98", 1], [1150, 1176, 671, "#38d878", 2, "2 1"], [870, 1237, 684, "#3c3c84", 1, "1 2"]]} />
      <path d="M984 664L987 679L991 664" fill="none" stroke="#189c4c" />
    </svg>
  );
}

/* ---------- YM fifteen-second ---------- */

const scalpFall = spread(844, 3, [
  [540, 550], [545, 558], [546, 556], [548, 560], [555, 563], [558, 569], [560, 572], [565, 584], [562, 582], [565, 575], [567, 580],
  [572, 582], [572, 586], [570, 584], [573, 585], [575, 584], [573, 585], [575, 586], [573, 583], [572, 582], [570, 580], [568, 578],
  [565, 574], [563, 573], [562, 572], [560, 570], [558, 570], [556, 570], [555, 582],
]);
const scalpRise = spread(943, 3, [[552, 564], [548, 560], [551, 558], [550, 558], [547, 557], [550, 558], [548, 557], [547, 556]]);
const scalpTop = [[1010, 530, 540], [1015, 533, 541], [1038, 530, 537], [1041, 526, 534], [1044, 524, 531], [1048, 521, 528], [1052, 520, 528], [1056, 516, 524], [1060, 513, 521], [1063, 517, 529], [1067, 525, 532]];

function ScalpPlot() {
  return (
    <svg viewBox="808 312 309 348" preserveAspectRatio="xMaxYMin meet" role="img" aria-label="YM 06-21 fifteen second chart">
      <Bands
        x1={812}
        x2={1073}
        items={[
          [322, 3, "#fdf4fd"], [326, 5, "#cc8cf2"], [346, 5, "#c6a8f8"], [351, 5, "#a8a0f8"], [365, 5, "#facffa"], [390, 5, "#facffa"],
          [425, 5, "#d0d0fa"], [431, 4, "#d0d0fa"], [443, 5, "#facffa"], [606, 5, "#a98cf6"], [623, 4, "#facffa"], [627, 4, "#d0ccfa"], [626, 1, "#c0a0f0"],
        ]}
      />
      <Ohlc bars={[[815, 557, 567], [818, 553, 563], [821, 548, 560], [824, 545, 555], [827, 541, 550]]} color="#d01820" />
      <Ohlc bars={[[829, 540, 554], [832, 533, 545], [835, 530, 542], [838, 526, 540], [841, 532, 545], [939, 540, 570]]} color="#f4cc10" />
      <Ohlc bars={scalpFall} color="#d01820" />
      <Ohlc bars={[[930, 552, 583], ...scalpRise, ...scalpTop]} color="#1420b0" />
      <Rules
        items={[
          [937, 1064, 481, "#28c828", 1], [1037, 1063, 484, "#1020c8", 2, "6 3"], [1037, 1073, 530, "#f0a848", 2],
          [1037, 1063, 546, "#28d828", 2, "6 3"], [1037, 1063, 558, "#28c828", 2, "6 3"],
        ]}
      />
      <Box x={989} y={479} w={48} h={10} fill="#1020d8" ink="#fff" label="Target (33751) ." size={6} />
      <Box x={1007} y={526} w={30} h={10} fill="#f4a02c" ink="#ffe0b0" label="/ (33685) ." size={6} />
      <Box x={967} y={541} w={70} h={10} fill="#28e028" ink="#c8ffc8" label="Trailing Stop 1 (33665) ." size={6} />
      <Box x={967} y={553} w={70} h={10} fill="#38c838" ink="#c8ffc8" label="Trailing Stop 2 (33646) ." size={6} />
      <Rules items={[[937, 1064, 546, "#c83030", 1], [937, 1064, 558, "#c83030", 1], [1071, 1075, 481, "#28c828", 1]]} />
      <path d="M868 474H934L937 481L934 488H868Z" fill={LIME} />
      <Txt $size={11} $bold x={871} y={485} fill="#06310a">2s Sell LMT</Txt>
      <path d="M876 538H934L937 545L934 552H876ZM876 552H934L937 558L934 565H876Z" fill="#ff0000" />
      <Txt $size={11} $bold x={878} y={549} fill="#fff">1 Sell STP</Txt>
      <Txt $size={11} $bold x={878} y={562} fill="#fff">1 Sell STP</Txt>
      <rect x={938} y={522} width={57} height={16} fill="#000" />
      <rect x={995} y={522} width={12} height={16} fill="#10d020" />
      <Txt $size={11} $bold x={947} y={534} fill="#e01820">-$10.00</Txt>
      <Txt $size={11} $bold x={998} y={534} fill="#06310a">2</Txt>
      <Txt $size={7} x={880} y={591} fill="#289028">33669.00</Txt>
      <PriceTags
        x={1074}
        right={1117}
        items={[
          ["33975", 322, "#f2b0f6", "#fff", 0.8], ["33971", 328, "#cc70f0", "#fff", 0.85], ["33943", 347, "#b898f8", "#fff", 0.8],
          ["33936", 353, "#9088f4", "#fff", 0.85], ["33916", 367, "#f8cdf8"], ["33881", 392, "#f8cdf8"], ["33831", 426, "#c4c4fa", "#fff", 0.8],
          ["33823", 433, "#b0b0f6", "#fff", 0.8], ["33805", 446, "#f8cdf8"], ["33755", 481, LIME, "#06310a"], ["33685", 531, "#0000ff"],
          ["33664", 545, "#ff0000"], ["33646", 558, "#ff0000"], ["33574", 609, "#a588f4"], ["33553", 625, "#f0c8fa", "#fff", 0.8],
          ["33546", 628, "#c8b4f8", "#fff", 0.8],
        ]}
      />
    </svg>
  );
}

/* ---------- floating layers ---------- */

const Clock = styled.div`
  position: absolute;
  right: 129px;
  bottom: -5px;
  width: 158px;
  color: #40e0d0;
  font-family: "Liberation Sans Narrow", "Roboto Condensed", ${SANS};
  font-weight: 700;
  -webkit-text-stroke: 1px #40e0d0;
  white-space: nowrap;
`;

const ClockTime = styled.div`
  display: flex;
  justify-content: flex-end;
  gap: 2px;
  font-size: 52px;
  line-height: 42px;
  -webkit-text-stroke-width: 2px;
`;

const ClockDate = styled.div`
  display: flex;
  gap: 14px;
`;

const ClockDay = styled.div`
  font-size: 40px;
  line-height: 36px;
`;

const ClockMonth = styled.div`
  font-size: 22px;
  line-height: 20px;
`;

const ClockWeekday = styled.div`
  font-size: 14px;
  line-height: 12px;
`;

const FloatingWindow = styled.section`
  position: absolute;
  left: 805px;
  top: 290px;
  width: 316px;
  height: 376px;
  display: flex;
  flex-direction: column;
  padding-bottom: 3px;
  background: #f0f0f0;
  border: solid #d2d2d6;
  border-width: 1px 1px 1px 0;
`;

const Cursor = styled.svg`
  position: absolute;
  left: 820px;
  top: 295px;
`;

export default function App() {
  return (
    <>
      <GlobalStyle />
      <Desktop>
        <AnalyzerRow>
          <AnalyzerPanel $side="left">
            <TitleStrip $height={7}>
              <TitleTab>Market Analyzer</TitleTab>
            </TitleStrip>
            <Sheet $bg="#fff">
              <Analyzer
                widths={[79, 79, 75, 77, 76, 73, 77, 82, 75]}
                headHeight={19}
                totals={["TOTAL", "", "", "", "", "1098", "$ 8316.25", "", ""]}
                trades={swingTrades}
                dots={false}
              />
              <Footnote>Automated swing signal</Footnote>
            </Sheet>
          </AnalyzerPanel>
          <AnalyzerPanel $side="right">
            <TitleStrip $height={6}>
              <TitleTab>Market Analyzer</TitleTab>
            </TitleStrip>
            <Sheet $bg="linear-gradient(#dfdfdf 90%, #ececec)">
              <Analyzer
                widths={[70, 63, 63, 58, 60, 60, 62, 70, 59]}
                headHeight={18}
                totals={["TOTAL", "", "", "71046.75", "", "-24", "$ 17.50", "", ""]}
                trades={scalpTrades}
                dots
              />
              <Footnote>{"Automated Scalp  Signal  15 SEC"}</Footnote>
            </Sheet>
          </AnalyzerPanel>
        </AnalyzerRow>

        <ChartRow>
          <ChartWindow $edge>
            <ChartToolbar symbol="ES 06-21" period="1 Minute" height={15} shift={3} />
            <PlotFrame $sides="4px 0 1px" $bg={NAVY}>
              <EsPlot />
              <FixedButton>F</FixedButton>
            </PlotFrame>
            <Scrollbar sides="4px 0 1px" />
            <Sheets indent={10} names={["ES 06-21", "GC 06-21", "BTCUSD", "+"]} />
          </ChartWindow>
          <ChartWindow>
            <ChartToolbar symbol="NQ 06-21" period="1 Minute" height={15} />
            <PlotFrame $sides="3px 0 4px" $bg={NAVY}>
              <NqPlot />
              <FixedButton>F</FixedButton>
            </PlotFrame>
            <Scrollbar sides="3px 0 4px" />
            <Sheets indent={13} names={["NQ 06-21", "RTY 06-21", "BTCUSD", "+"]} />
          </ChartWindow>
          <ChartWindow $edge>
            <ChartToolbar symbol="YM 06-21" period="1 Minute" height={15} />
            <PlotFrame $sides="2px 0 4px" $bg={NAVY}>
              <YmPlot />
              <FixedButton>F</FixedButton>
            </PlotFrame>
            <Scrollbar sides="2px 0 4px" />
          </ChartWindow>
        </ChartRow>

        <Clock>
          <ClockTime>
            <span>2:44</span>
            <span>PM</span>
          </ClockTime>
          <ClockDate>
            <ClockDay>22</ClockDay>
            <div>
              <ClockMonth>APRIL</ClockMonth>
              <ClockWeekday>THURSDAY</ClockWeekday>
            </div>
          </ClockDate>
        </Clock>

        <FloatingWindow>
          <ChartToolbar symbol="YM 06-21" period="15 Second" height={13} focused />
          <PlotFrame $sides="3px 0 3px" $bg="#fff">
            <ScalpPlot />
            <FixedButton>F</FixedButton>
          </PlotFrame>
          <Scrollbar sides="3px 0 3px" />
        </FloatingWindow>
        <Cursor width="8" height="11" viewBox="0 0 8 11">
          <path d="M.5 .5V8.5L2.500 6.800L4 10.200L5.500 9.500L4 6.300H6.800Z" fill="#fff" stroke="#444" strokeWidth=".6" />
        </Cursor>
      </Desktop>
    </>
  );
}
